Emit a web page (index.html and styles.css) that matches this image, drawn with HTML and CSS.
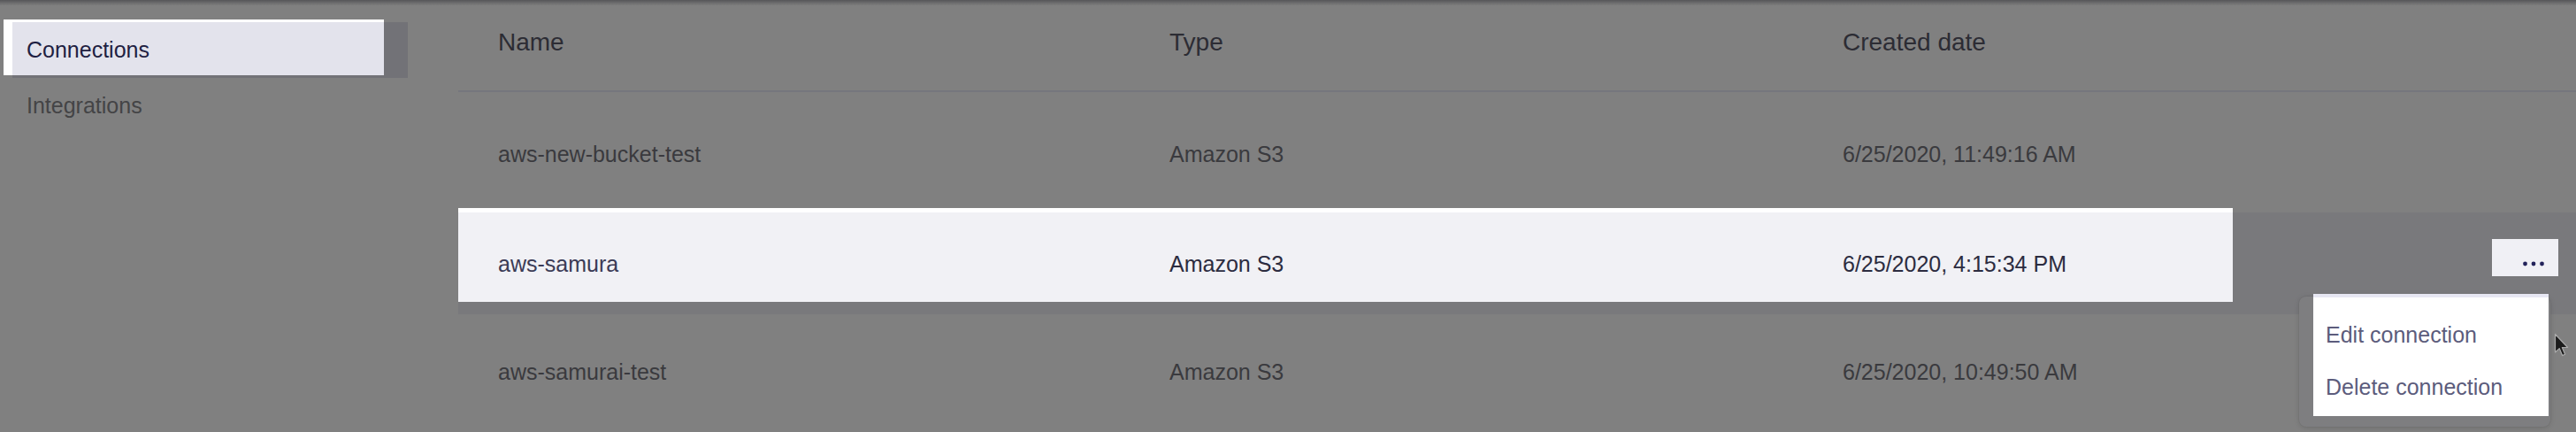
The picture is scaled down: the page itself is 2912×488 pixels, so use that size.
FILE: index.html
```html
<!DOCTYPE html>
<html lang="en">
<head>
<meta charset="utf-8">
<title>Connections</title>
<link rel="stylesheet" href="styles.css">
</head>
<body>
<div class="topbar"></div>
<div class="layout">
  <nav class="sidebar">
    <div class="nav-item active"><span class="nav-label">Connections</span></div>
    <div class="nav-item"><span class="nav-label">Integrations</span></div>
  </nav>
  <main class="content">
    <div class="table">
      <div class="row head">
        <div class="cell">Name</div>
        <div class="cell">Type</div>
        <div class="cell">Created date</div>
        <div class="cell"></div>
      </div>
      <div class="row r1">
        <div class="cell">aws-new-bucket-test</div>
        <div class="cell">Amazon S3</div>
        <div class="cell">6/25/2020, 11:49:16 AM</div>
        <div class="cell"></div>
      </div>
      <div class="row r2 hover">
        <div class="cell">aws-samura</div>
        <div class="cell">Amazon S3</div>
        <div class="cell">6/25/2020, 4:15:34 PM</div>
        <div class="cell actions">
          <button class="more" type="button" aria-label="More">
            <svg width="75" height="42" viewBox="0 0 75 42"><circle cx="37.5" cy="28" r="2.4" fill="#23235a"/><circle cx="47" cy="28" r="2.4" fill="#23235a"/><circle cx="56.5" cy="28" r="2.4" fill="#23235a"/></svg>
          </button>
        </div>
      </div>
      <div class="row r3">
        <div class="cell">aws-samurai-test</div>
        <div class="cell">Amazon S3</div>
        <div class="cell">6/25/2020, 10:49:50 AM</div>
        <div class="cell"></div>
      </div>
    </div>
    <div class="menu">
      <div class="menu-item">Edit connection</div>
      <div class="menu-item">Delete connection</div>
    </div>
  </main>
</div>
<svg class="cursor" width="20" height="30" viewBox="0 0 20 30"><path d="M1.5 1.5 L1.5 22 L6.2 17.6 L9.6 25.6 L12.6 24.3 L9.3 16.5 L15.6 16.5 Z" fill="#1b1b1b" stroke="#a9a9a9" stroke-width="1.2" stroke-linejoin="round"/></svg>
</body>
</html>
```
FILE: styles.css
```css
html, body {
  margin: 0;
  padding: 0;
}
body {
  width: 2912px;
  height: 488px;
  overflow: hidden;
  background: #808080;
  font-family: "Liberation Sans", Arial, sans-serif;
  position: relative;
}
.topbar {
  height: 6px;
  background: linear-gradient(#555558, #6f6f70 60%, #7c7c7c);
}
.layout {
  display: flex;
}
.sidebar {
  width: 518px;
  flex: none;
  padding-top: 19px;
  box-sizing: border-box;
}
.nav-item {
  position: relative;
  margin-left: 14px;
  width: 447px;
  height: 63px;
  line-height: 63px;
  padding-left: 16px;
  box-sizing: border-box;
  font-size: 25px;
  color: #444446;
}
.nav-item.active {
  background: #727277;
  color: #1f1f42;
}
.nav-item.active::before {
  content: "";
  position: absolute;
  left: -10px;
  top: -3px;
  width: 430px;
  height: 63px;
  box-sizing: border-box;
  border-left: 10px solid #ffffff;
  border-top: 3px solid #ffffff;
  background: #e3e3ec;
}
.nav-label {
  position: relative;
}
.content {
  flex: 1;
  position: relative;
}
.row {
  display: grid;
  grid-template-columns: 759px 761px 1fr 95px;
  position: relative;
  font-size: 25px;
  line-height: 30px;
  color: #3a3a3e;
  align-items: center;
}
.cell {
  padding-left: 45px;
  position: relative;
  white-space: nowrap;
}
.row.head {
  height: 98px;
  box-sizing: border-box;
  padding-top: 26px;
  align-items: start;
  font-size: 28px;
  line-height: 32px;
  color: #2c2c34;
  border-bottom: 2px solid #75767d;
}
.row.r1 {
  height: 136px;
  padding-top: 3px;
  box-sizing: border-box;
}
.row.r2 {
  height: 115px;
}
.row.r3 {
  height: 130px;
}
.row.hover {
  background: #79797c;
  color: #2c2c40;
}
.row.hover::before {
  content: "";
  position: absolute;
  left: 0;
  top: -5px;
  width: 2006px;
  height: 106px;
  box-sizing: border-box;
  border-top: 5px solid #ffffff;
  background: #f1f1f5;
}
.row.hover .cell:first-child {
  color: #3b3b55;
}
.cell.actions {
  padding-left: 0;
  align-self: start;
  margin-top: 30px;
}
.more {
  display: block;
  width: 75px;
  height: 42px;
  padding: 0;
  margin: 0;
  border: 0;
  background: #f0f0f5;
}
.more svg {
  display: block;
}
.menu {
  position: absolute;
  right: 29px;
  top: 329px;
  width: 284px;
  height: 147px;
  box-sizing: border-box;
  padding-top: 14px;
  border-radius: 8px;
  background: #7e7e80;
  box-shadow: 0 1px 6px rgba(0, 0, 0, 0.14), 0 0 0 1px rgba(0, 0, 0, 0.03);
}
.menu::before {
  content: "";
  position: absolute;
  left: 16px;
  top: -3px;
  width: 266px;
  height: 138px;
  box-sizing: border-box;
  border-top: 4px solid #e7e7f3;
  background: #ffffff;
}
.menu-item {
  position: relative;
  padding-left: 30px;
  font-size: 25px;
  line-height: 59px;
  color: #5c5c7c;
}
.cursor {
  position: absolute;
  left: 2887px;
  top: 376px;
}
```
